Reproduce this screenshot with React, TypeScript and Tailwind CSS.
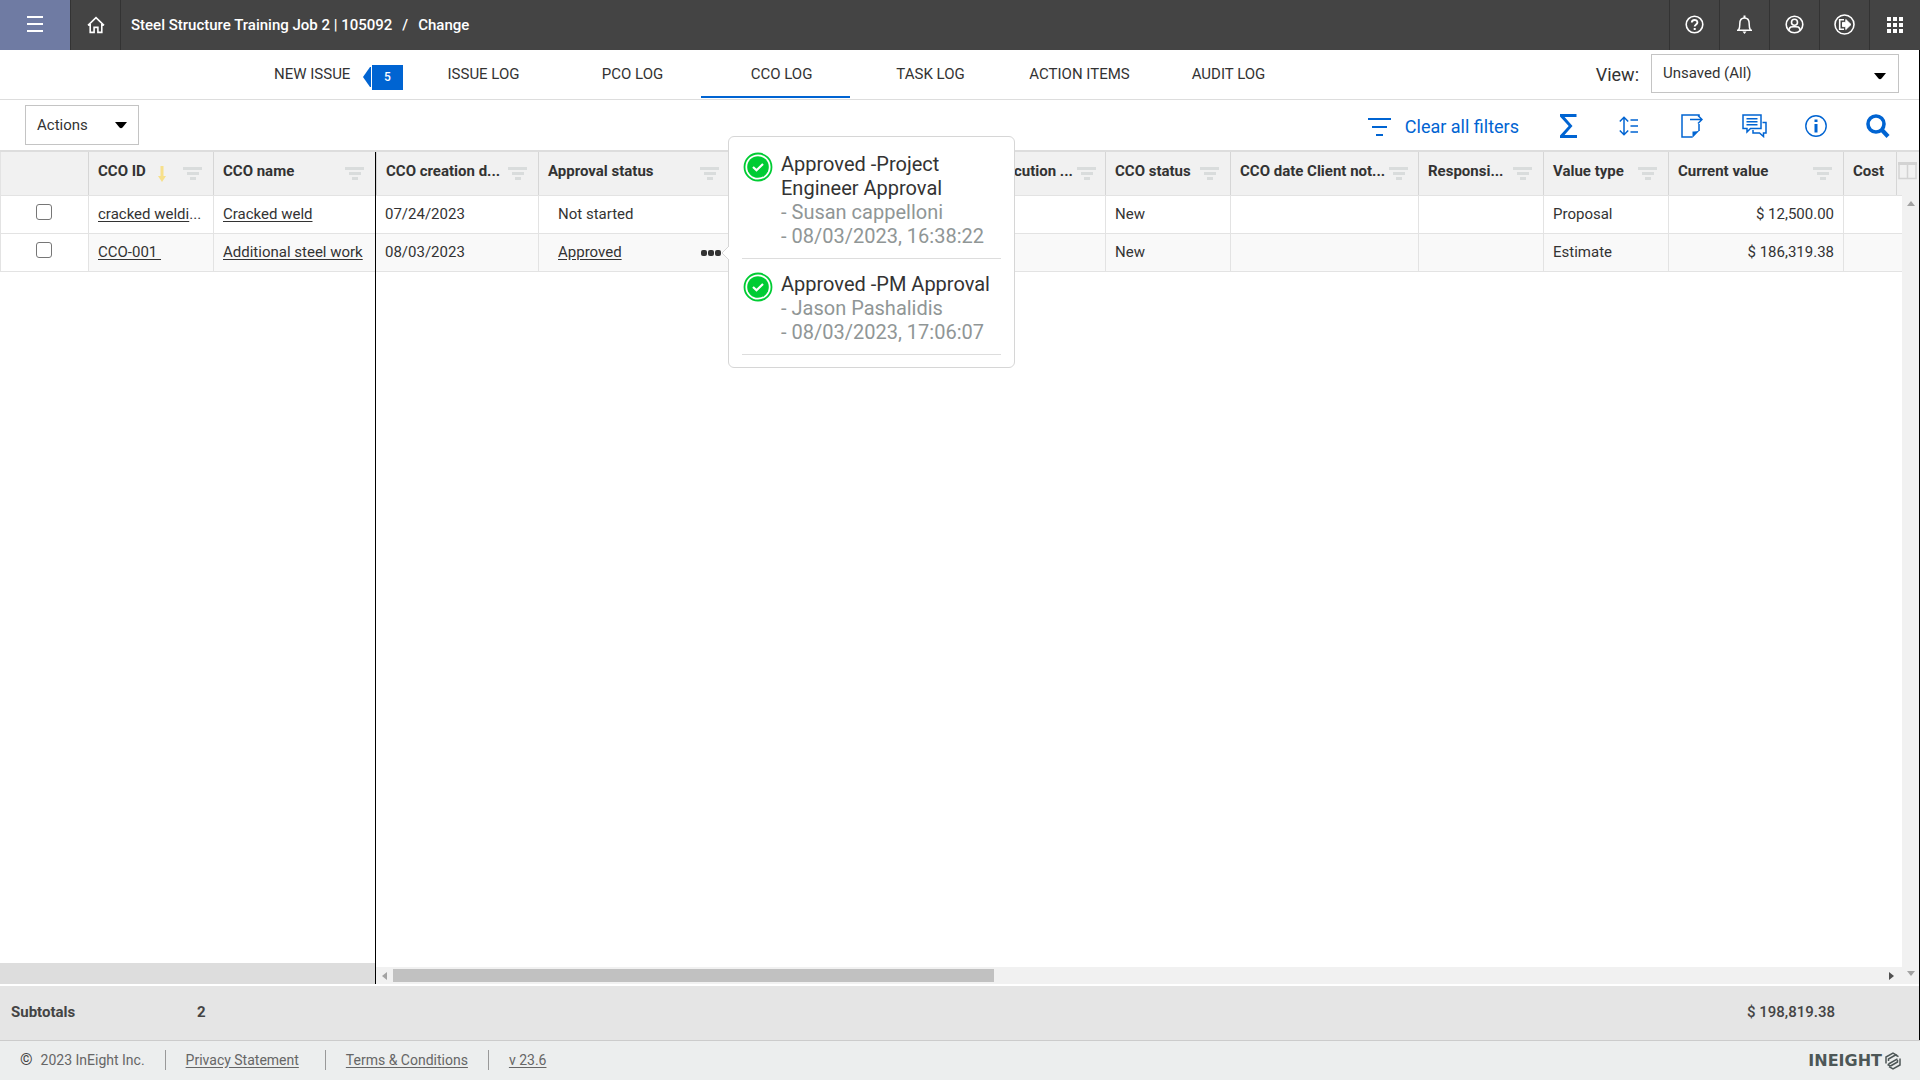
import type { ReactNode } from "react";
import clsx from "clsx";

const FilterIcon = () => (
  <svg width="19" height="14" viewBox="0 0 19 14" className="shrink-0" fill="#d9dcdc">
    <rect x="0" y="0" width="19" height="3" />
    <rect x="4" y="5" width="12" height="3" />
    <rect x="7" y="10" width="6" height="3" />
  </svg>
);

const Caret = ({ className }: { className?: string }) => (
  <svg width="12" height="7" viewBox="0 0 12 7" className={className} fill="#000">
    <path d="M0 0h12L7.5 5.6q-1.5 1.4-3 0z" />
  </svg>
);

const HeaderButton = ({ label, children }: { label: string; children: ReactNode }) => (
  <button
    aria-label={label}
    className="flex h-full w-[50px] items-center justify-center border-l border-[#333] pb-px"
  >
    {children}
  </button>
);

const TopBar = () => (
  <header className="flex h-[50px] shrink-0 items-center bg-[#444] pr-px text-white">
    <button aria-label="Menu" className="flex h-full w-[70px] items-center justify-center bg-[#6f7ba3] pb-[2px]">
      <svg width="16" height="16" viewBox="0 0 16 16" fill="#fff">
        <rect x="0" y="0" width="16" height="2" />
        <rect x="0" y="7" width="16" height="2" />
        <rect x="0" y="14" width="16" height="2" />
      </svg>
    </button>
    <HeaderButton label="Home">
      <svg width="18" height="18" viewBox="0 0 18 18" fill="none" stroke="#fff" strokeWidth="1.6">
        <path d="M1 9.3 9 1.6l8 7.7M3.2 8v8.4h3.9v-5h3.8v5h3.9V8" />
      </svg>
    </HeaderButton>
    <nav className="flex h-full flex-1 items-center gap-[10px] border-l border-[#333] pl-[10px] text-[15px] font-medium">
      <a href="#job">Steel Structure Training Job 2 | 105092</a>
      <span>/</span>
      <a href="#change">Change</a>
    </nav>
    <HeaderButton label="Help">
      <svg width="19" height="19" viewBox="0 0 19 19" fill="none" stroke="#fff" strokeWidth="1.6">
        <circle cx="9.5" cy="9.5" r="8.3" />
        <path d="M6.8 7.6c0-3.6 5.6-3.4 5.6-.2 0 2-2.7 2-2.7 4.2" strokeWidth="1.9" />
        <path d="M8.7 13h2v2h-2z" fill="#fff" stroke="none" />
      </svg>
    </HeaderButton>
    <HeaderButton label="Notifications">
      <svg width="17" height="19" viewBox="0 0 17 19" fill="none" stroke="#fff" strokeWidth="1.5">
        <path d="M1 15.3h15M2.6 15c1.3-1.6 1.2-3 1.2-6.3 0-3.3 1.7-5.7 4.7-5.7s4.7 2.4 4.7 5.7c0 3.3-.1 4.7 1.2 6.3" />
        <path d="M8.5.5V3" strokeWidth="2" />
        <path d="M6.5 16.5h4l-2 2.5z" fill="#fff" stroke="none" />
      </svg>
    </HeaderButton>
    <HeaderButton label="Account">
      <svg width="19" height="19" viewBox="0 0 19 19" fill="none" stroke="#fff" strokeWidth="1.6">
        <circle cx="9.5" cy="9.5" r="8.3" />
        <circle cx="9.5" cy="7.2" r="3" />
        <path d="M3.8 15.2c1-4 3-3.5 5.7-3.5s4.7-.5 5.7 3.5" />
      </svg>
    </HeaderButton>
    <HeaderButton label="Sign out">
      <svg width="21" height="21" viewBox="0 0 21 21" fill="none" stroke="#fff" strokeWidth="1.6">
        <circle cx="10.5" cy="10.5" r="9.5" />
        <path d="M10 5.8H5.7v9.4H10" />
        <path d="M8.5 8.4h3.3V5.5l5.2 5-5.2 5v-2.9H8.5z" fill="#fff" stroke="#fff" strokeWidth="1" />
      </svg>
    </HeaderButton>
    <HeaderButton label="Apps">
      <svg width="16" height="16" viewBox="0 0 16 16" fill="#fff">
        {[0, 6, 12].map((y) => [0, 6, 12].map((x) => <rect key={`${x}-${y}`} x={x} y={y} width="4" height="4" />))}
      </svg>
    </HeaderButton>
  </header>
);

const tabs = ["ISSUE LOG", "PCO LOG", "CCO LOG", "TASK LOG", "ACTION ITEMS", "AUDIT LOG"];

const TabBar = () => (
  <div className="flex h-[50px] shrink-0 items-start justify-between border-b border-[#ddd] pr-5">
    <nav className="flex h-12 pl-[274px] text-[15px]">
      <a href="#new" className="flex w-[129px] items-center justify-between">
        <span>NEW ISSUE</span>
        <span className="flex items-center gap-px pt-[6px]">
          <svg width="8" height="20" viewBox="0 0 8 20" fill="#0064d2">
            <path d="M0 10 7 0h1v20H7z" />
          </svg>
          <span className="flex h-[25px] w-[31px] items-center justify-center bg-[#0064d2] text-xs font-medium text-white">
            5
          </span>
        </span>
      </a>
      {tabs.map((tab) => (
        <a
          key={tab}
          href={`#${tab.toLowerCase().replace(" ", "-")}`}
          className={clsx(
            "flex w-[149px] items-center justify-center border-b-2 pl-3 pt-[3px]",
            tab === "CCO LOG" ? "border-[#0064d2]" : "border-transparent",
          )}
        >
          {tab}
        </a>
      ))}
    </nav>
    <div className="flex items-center gap-3 pt-1">
      <label htmlFor="view" className="pt-[3px] text-lg">
        View:
      </label>
      <div className="relative">
        <select
          id="view"
          className="h-[39px] w-[248px] appearance-none border border-[#c4c4c4] bg-white px-[11px] text-[15px]"
        >
          <option>Unsaved (All)</option>
        </select>
        <Caret className="pointer-events-none absolute right-[13px] top-[19px]" />
      </div>
    </div>
  </div>
);

const ToolButton = ({ label, children }: { label: string; children: ReactNode }) => (
  <button aria-label={label} className="flex h-full w-[62px] items-center justify-center pt-[2px]">
    {children}
  </button>
);

const Toolbar = () => (
  <div className="flex h-[50px] shrink-0 items-center pl-[25px] pr-[10px] text-[#0064d2]">
    <button className="flex h-10 w-[114px] items-center justify-between border border-[#c4c4c4] px-[11px] text-[15px] text-[#333]">
      Actions
      <Caret />
    </button>
    <button className="ml-auto mr-[18px] flex items-center gap-[14px] pt-[3px] text-lg">
      <svg width="23" height="18" viewBox="0 0 23 18" fill="#0064d2">
        <rect x="0" y="0" width="23" height="2" />
        <rect x="4" y="8" width="15" height="2" />
        <rect x="8" y="16" width="7" height="2" />
      </svg>
      Clear all filters
    </button>
    <ToolButton label="Subtotals">
      <svg width="17" height="24" viewBox="0 0 17 24" fill="#0064d2">
        <path d="M0 0h16.5v3H4.6l7.900 9-8 9H17v3H0v-2.400L8.700 12 0 2.400z" />
      </svg>
    </ToolButton>
    <ToolButton label="Row height">
      <svg width="22" height="20" viewBox="0 0 22 20" fill="none" stroke="#0064d2" strokeWidth="1.5">
        <path d="M5 1.500v17M.8 5.500 5 1.200l4.200 4.300M.8 14.500 5 18.800l4.200-4.300M11.500 4H19M11.500 10H19M11.500 16H19" />
      </svg>
    </ToolButton>
    <ToolButton label="Export">
      <svg width="22" height="24" viewBox="0 0 22 24" fill="none" stroke="#0064d2" strokeWidth="1.5">
        <path d="M15 1H1v22h10.500M18 2.500V1h-3M18 10v7" />
        <path d="M9 5.500h12M17 1.500l4 4-4 4" />
        <path d="M18.800 16.200 11.500 23.800V17.500q4 .3 7.300-1.300z" fill="#0064d2" stroke="none" />
      </svg>
    </ToolButton>
    <ToolButton label="Comments">
      <svg width="25" height="24" viewBox="0 0 25 24" fill="none" stroke="#0064d2" strokeWidth="1.5">
        <path d="M1 1h18v13.500H8.500L5 18v-3.500H1z" />
        <path d="M4.500 4.800h11M4.500 7.800h11M4.500 10.800h11" />
        <path d="M20.500 8.500H24V19h-2.500v3.500L17.500 19H11v-3" />
      </svg>
    </ToolButton>
    <ToolButton label="Information">
      <svg width="22" height="22" viewBox="0 0 22 22" fill="none" stroke="#0064d2" strokeWidth="1.4">
        <circle cx="11" cy="11" r="10.2" />
        <path d="M9.500 4.500h3v2.600h-3zM9.500 9h3v8.500h-3z" fill="#0064d2" stroke="none" />
      </svg>
    </ToolButton>
    <ToolButton label="Search">
      <svg width="24" height="24" viewBox="0 0 24 24" fill="none" stroke="#0064d2">
        <circle cx="10" cy="10" r="8" strokeWidth="3.6" />
        <path d="m15.500 15.500 6.500 7" strokeWidth="4.2" />
      </svg>
    </ToolButton>
  </div>
);

const Th = ({ title, sorted }: { title: string; sorted?: boolean }) => (
  <th className="h-[44px] border-b border-[#e3e3e3] bg-[#f1f1f1] p-0 text-left font-bold">
    <div className="flex h-[43px] items-center gap-1 border-l border-[#d6d6d6] pb-1 pl-[9px] pr-[11px]">
      <span className="whitespace-nowrap">{title}</span>
      {sorted && (
        <svg width="8" height="16" viewBox="0 0 8 16" className="ml-2 mt-1 shrink-0" fill="#f7e08b">
          <path d="M2.500 0h3v10H8l-4 6-4-6h2.500z" />
        </svg>
      )}
      <span className="ml-auto pt-[5px]">
        <FilterIcon />
      </span>
    </div>
  </th>
);

const cell = "h-[38px] truncate border-b border-l border-[#e3e3e3] px-[9px] py-0";

const frozenRows = [
  { id: "cracked weldi", clipped: true, name: "Cracked weld" },
  { id: "CCO-001\u00a0", clipped: false, name: "Additional steel work" },
];

const FrozenTable = () => (
  <table className="w-full table-fixed border-separate border-spacing-0">
    <colgroup>
      <col className="w-[88px]" />
      <col className="w-[125px]" />
      <col />
    </colgroup>
    <thead>
      <tr>
        <th aria-label="Select" className="h-[44px] border-b border-l border-[#e3e3e3] bg-[#f1f1f1]" />
        <Th title="CCO ID" sorted />
        <Th title="CCO name" />
      </tr>
    </thead>
    <tbody>
      {frozenRows.map(({ id, clipped, name }, i) => (
        <tr key={id}>
          <td className="h-[38px] border-b border-l border-[#e3e3e3] p-0">
            <div className="flex justify-center pb-[5px] pr-[2px]">
              <input
                type="checkbox"
                aria-label={`Select ${name}`}
                className="size-4 appearance-none rounded-[3px] border border-[#767676] bg-white"
              />
            </div>
          </td>
          <td className={clsx(cell, i % 2 === 1 && "bg-[#f9f9f9]")}>
            <a href="#cco" className="underline underline-offset-2">
              {id}
            </a>
            {clipped && "..."}
          </td>
          <td className={clsx(cell, i % 2 === 1 && "bg-[#f9f9f9]")}>
            <a href="#cco" className="underline underline-offset-2">
              {name}
            </a>
          </td>
        </tr>
      ))}
    </tbody>
  </table>
);

const approvals = [
  { step: "Project Engineer Approval", by: "Susan cappelloni", at: "08/03/2023, 16:38:22" },
  { step: "PM Approval", by: "Jason Pashalidis", at: "08/03/2023, 17:06:07" },
];

const ApprovalPopup = () => (
  <div
    role="dialog"
    aria-label="Approval history"
    className="absolute left-[352px] top-[-16px] w-[287px] rounded-md border border-[#d6d6d6] bg-white px-[13px] pb-3 pt-[2px]"
  >
    <svg width="8" height="14" viewBox="0 0 8 14" className="absolute left-[-8px] top-[109px]">
      <path d="M8 0 1 7l7 7" fill="#fff" stroke="#d6d6d6" />
    </svg>
    <ul>
      {approvals.map(({ step, by, at }) => (
        <li key={step} className="flex gap-2 border-b border-[#ddd] pb-[10px] pt-[13px] pl-px text-xl leading-6">
          <svg width="30" height="30" viewBox="0 0 30 30" className="shrink-0">
            <circle cx="15" cy="15" r="13.5" fill="#fff" stroke="#00cc33" strokeWidth="1.8" />
            <circle cx="15" cy="15" r="10.8" fill="#00cc33" />
            <path d="m10 15 3.500 3.300L20 12" fill="none" stroke="#fff" strokeWidth="2.2" />
          </svg>
          <div className="text-[#909696]">
            <p className="text-[#333]">Approved -{step}</p>
            <p>- {by}</p>
            <p>- {at}</p>
          </div>
        </li>
      ))}
    </ul>
  </div>
);

const rows = [
  { created: "07/24/2023", approval: "Not started", status: "New", type: "Proposal", value: "$ 12,500.00" },
  { created: "08/03/2023", approval: "Approved", status: "New", type: "Estimate", value: "$ 186,319.38" },
];

const ScrollTable = () => (
  <table className="w-full table-fixed border-separate border-spacing-0">
    <colgroup>
      <col className="w-[162px]" />
      <col className="w-[192px]" />
      <col className="w-[274px]" />
      <col className="w-[101px]" />
      <col className="w-[125px]" />
      <col className="w-[188px]" />
      <col className="w-[125px]" />
      <col className="w-[125px]" />
      <col className="w-[175px]" />
      <col />
    </colgroup>
    <thead>
      <tr>
        <Th title="CCO creation d..." />
        <Th title="Approval status" />
        <th className="border-b border-[#e3e3e3] bg-[#f1f1f1]" />
        <Th title="cution ..." />
        <Th title="CCO status" />
        <Th title="CCO date Client not..." />
        <Th title="Responsi..." />
        <Th title="Value type" />
        <Th title="Current value" />
        <th className="h-[44px] border-b border-[#e3e3e3] bg-[#f1f1f1] p-0 text-left font-bold">
          <div className="flex h-[43px] items-center border-l border-[#d6d6d6] pb-1 pl-[9px]">Cost</div>
        </th>
      </tr>
    </thead>
    <tbody>
      {rows.map(({ created, approval, status, type, value }, i) => (
        <tr key={created} className={i % 2 === 1 ? "bg-[#f9f9f9]" : "bg-white"}>
          <td className="h-[38px] border-b border-[#e3e3e3] px-[9px] py-0">{created}</td>
          <td className={cell}>
            <div className="flex items-center justify-between pl-[10px]">
              {approval === "Approved" ? (
                <>
                  <a href="#approval" className="underline underline-offset-2">
                    {approval}
                  </a>
                  <button aria-label="Show approval history">
                    <svg width="20" height="6" viewBox="0 0 20 6" fill="#333">
                      <rect x="0" width="6" height="6" rx="2" />
                      <rect x="7" width="6" height="6" rx="2" />
                      <rect x="14" width="6" height="6" rx="2" />
                    </svg>
                  </button>
                </>
              ) : (
                approval
              )}
            </div>
          </td>
          <td className={cell} />
          <td className="border-b border-[#e3e3e3]" />
          <td className={cell}>{status}</td>
          <td className={cell} />
          <td className={cell} />
          <td className={cell}>{type}</td>
          <td className={clsx(cell, "text-right")}>{value}</td>
          <td className={cell} />
        </tr>
      ))}
    </tbody>
  </table>
);

const Grid = () => (
  <div className="flex min-h-0 flex-1 border-t-2 border-[#ddd] text-[15px]">
    <div className="flex w-[376px] shrink-0 flex-col border-r border-black">
      <FrozenTable />
      <div className="mt-auto h-[21px] bg-[#ddd]" />
    </div>
    <div className="relative flex min-w-0 flex-1 flex-col">
      <div className="flex min-h-0 flex-1">
        <div className="flex min-w-0 flex-1 flex-col">
          <ScrollTable />
          <div className="mt-auto flex h-[17px] items-center bg-[#f1f1f1] pl-[6px] pr-2">
            <svg width="5" height="8" viewBox="0 0 5 8" fill="#a3a3a3">
              <path d="M5 0v8L0 4z" />
            </svg>
            <div className="ml-[6px] h-[13px] w-[601px] bg-[#c1c1c1]" />
            <svg width="5" height="8" viewBox="0 0 5 8" className="ml-auto" fill="#505050">
              <path d="M0 0v8l5-4z" />
            </svg>
          </div>
        </div>
        <div className="flex w-[17px] flex-col items-center justify-between bg-[#f1f1f1] pb-2 pt-[49px]">
          <svg width="8" height="5" viewBox="0 0 8 5" fill="#a3a3a3">
            <path d="M0 5h8L4 0z" />
          </svg>
          <svg width="8" height="5" viewBox="0 0 8 5" fill="#a3a3a3">
            <path d="M0 0h8L4 5z" />
          </svg>
        </div>
      </div>
      <button
        aria-label="Choose columns"
        className="absolute right-0 top-0 flex h-[43px] w-[23px] border-l border-[#d6d6d6] bg-[#f1f1f1] pl-px pt-[10px]"
      >
        <svg width="19" height="18" viewBox="0 0 19 18" fill="none" stroke="#d3d3d3">
          <path d="M1 1h17v15.500H1zM9.500 1v15.500" strokeWidth="1.5" />
          <path d="M0 1.500h19" strokeWidth="3" />
        </svg>
      </button>
      <ApprovalPopup />
    </div>
  </div>
);

const Subtotals = () => (
  <div className="mt-[2px] flex h-[54px] shrink-0 items-center bg-[#e5e5e5] pb-[2px] pl-[11px] pr-[84px] text-[15px] font-bold text-[#444]">
    <span className="w-[186px]">Subtotals</span>
    <span>2</span>
    <span className="ml-auto font-medium">$ 198,819.38</span>
  </div>
);

const Footer = () => (
  <footer className="flex h-10 shrink-0 items-center border-t border-[#ccc] bg-[#eceeee] pb-[2px] pl-5 pr-[19px] text-sm text-[#666]">
    <span className="mr-2 text-base text-[#444]">©</span>
    <span>2023 InEight Inc.</span>
    <span className="ml-5 h-5 w-px bg-[#999]" />
    <a href="#privacy" className="ml-5 underline underline-offset-2">
      Privacy Statement
    </a>
    <span className="ml-[26px] h-5 w-px bg-[#999]" />
    <a href="#terms" className="ml-5 underline underline-offset-2">
      Terms &amp; Conditions
    </a>
    <span className="ml-5 h-5 w-px bg-[#999]" />
    <a href="#version" className="ml-5 underline underline-offset-2">
      v 23.6
    </a>
    <div className="ml-auto flex items-center gap-[3px] pt-[3px] text-[#4d5757]">
      <span className="font-['DejaVu_Sans',sans-serif] text-base font-bold leading-5">INEIGHT</span>
      <svg width="16" height="18" viewBox="0 0 16 18" fill="none" stroke="#4d5757" strokeWidth="1.5">
        <path d="M1 11.500V5l7-4 4 2.300M15 6.500V13l-7 4-4-2.300" />
        <path d="M3.500 9V7l7-4M3.500 12l9-5.200M5.500 14l7-4V8M10.500 3l3 1.700M5.500 14l-3-1.500" />
      </svg>
    </div>
  </footer>
);

const App = () => {
  return (
    <div className="flex h-screen flex-col overflow-hidden bg-white font-['Roboto',sans-serif] text-[#333]">
      <TopBar />
      <main className="flex min-h-0 flex-1 flex-col border-r border-black">
        <TabBar />
        <Toolbar />
        <Grid />
        <Subtotals />
      </main>
      <Footer />
    </div>
  );
};

export default App;
